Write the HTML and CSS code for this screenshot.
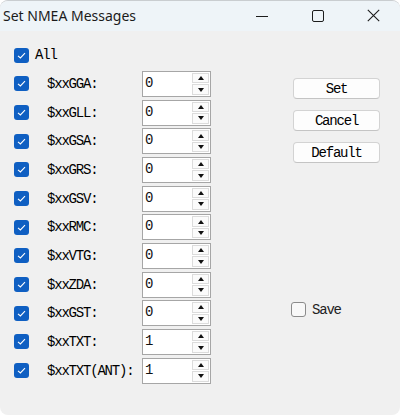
FILE: index.html
```html
<!DOCTYPE html>
<html>
<head>
<meta charset="utf-8">
<link rel="stylesheet" href="styles.css">
</head>
<body>
<div class="window">
  <div class="titlebar">
    <span class="title">Set NMEA Messages</span>
    <div class="controls">
      <span class="ctl ctl-min"><svg width="12" height="12" viewBox="0 0 12 12"><path d="M0 6.5H12" stroke="#1c1c1c" stroke-width="1"/></svg></span>
      <span class="ctl ctl-max"><svg width="12" height="12" viewBox="0 0 12 12"><rect x="0.5" y="0.5" width="11" height="11" rx="1.5" fill="none" stroke="#1c1c1c" stroke-width="1"/></svg></span>
      <span class="ctl ctl-close"><svg width="13" height="13" viewBox="0 0 13 13"><path d="M0.8 0.8L12.2 12.2M12.2 0.8L0.8 12.2" stroke="#1c1c1c" stroke-width="1.1"/></svg></span>
    </div>
  </div>
  <div class="content">
    <div class="list">
      <div class="row row-all">
        <span class="cb checked"><svg width="15" height="15" viewBox="0 0 15 15"><path d="M4 7.8L6.4 10L11 5.2" fill="none" stroke="#fff" stroke-width="1.1"/></svg></span>
        <span class="label">All</span>
      </div>
      <div class="row">
        <span class="cb checked"><svg width="15" height="15" viewBox="0 0 15 15"><path d="M4 7.8L6.4 10L11 5.2" fill="none" stroke="#fff" stroke-width="1.1"/></svg></span>
        <span class="label">$xxGGA:</span>
        <div class="spin"><span class="val">0</span><div class="arrows"><span class="btn"><i class="up"></i></span><span class="btn"><i class="down"></i></span></div></div>
      </div>
      <div class="row">
        <span class="cb checked"><svg width="15" height="15" viewBox="0 0 15 15"><path d="M4 7.8L6.4 10L11 5.2" fill="none" stroke="#fff" stroke-width="1.1"/></svg></span>
        <span class="label">$xxGLL:</span>
        <div class="spin"><span class="val">0</span><div class="arrows"><span class="btn"><i class="up"></i></span><span class="btn"><i class="down"></i></span></div></div>
      </div>
      <div class="row">
        <span class="cb checked"><svg width="15" height="15" viewBox="0 0 15 15"><path d="M4 7.8L6.4 10L11 5.2" fill="none" stroke="#fff" stroke-width="1.1"/></svg></span>
        <span class="label">$xxGSA:</span>
        <div class="spin"><span class="val">0</span><div class="arrows"><span class="btn"><i class="up"></i></span><span class="btn"><i class="down"></i></span></div></div>
      </div>
      <div class="row">
        <span class="cb checked"><svg width="15" height="15" viewBox="0 0 15 15"><path d="M4 7.8L6.4 10L11 5.2" fill="none" stroke="#fff" stroke-width="1.1"/></svg></span>
        <span class="label">$xxGRS:</span>
        <div class="spin"><span class="val">0</span><div class="arrows"><span class="btn"><i class="up"></i></span><span class="btn"><i class="down"></i></span></div></div>
      </div>
      <div class="row">
        <span class="cb checked"><svg width="15" height="15" viewBox="0 0 15 15"><path d="M4 7.8L6.4 10L11 5.2" fill="none" stroke="#fff" stroke-width="1.1"/></svg></span>
        <span class="label">$xxGSV:</span>
        <div class="spin"><span class="val">0</span><div class="arrows"><span class="btn"><i class="up"></i></span><span class="btn"><i class="down"></i></span></div></div>
      </div>
      <div class="row">
        <span class="cb checked"><svg width="15" height="15" viewBox="0 0 15 15"><path d="M4 7.8L6.4 10L11 5.2" fill="none" stroke="#fff" stroke-width="1.1"/></svg></span>
        <span class="label">$xxRMC:</span>
        <div class="spin"><span class="val">0</span><div class="arrows"><span class="btn"><i class="up"></i></span><span class="btn"><i class="down"></i></span></div></div>
      </div>
      <div class="row">
        <span class="cb checked"><svg width="15" height="15" viewBox="0 0 15 15"><path d="M4 7.8L6.4 10L11 5.2" fill="none" stroke="#fff" stroke-width="1.1"/></svg></span>
        <span class="label">$xxVTG:</span>
        <div class="spin"><span class="val">0</span><div class="arrows"><span class="btn"><i class="up"></i></span><span class="btn"><i class="down"></i></span></div></div>
      </div>
      <div class="row">
        <span class="cb checked"><svg width="15" height="15" viewBox="0 0 15 15"><path d="M4 7.8L6.4 10L11 5.2" fill="none" stroke="#fff" stroke-width="1.1"/></svg></span>
        <span class="label">$xxZDA:</span>
        <div class="spin"><span class="val">0</span><div class="arrows"><span class="btn"><i class="up"></i></span><span class="btn"><i class="down"></i></span></div></div>
      </div>
      <div class="row">
        <span class="cb checked"><svg width="15" height="15" viewBox="0 0 15 15"><path d="M4 7.8L6.4 10L11 5.2" fill="none" stroke="#fff" stroke-width="1.1"/></svg></span>
        <span class="label">$xxGST:</span>
        <div class="spin"><span class="val">0</span><div class="arrows"><span class="btn"><i class="up"></i></span><span class="btn"><i class="down"></i></span></div></div>
      </div>
      <div class="row">
        <span class="cb checked"><svg width="15" height="15" viewBox="0 0 15 15"><path d="M4 7.8L6.4 10L11 5.2" fill="none" stroke="#fff" stroke-width="1.1"/></svg></span>
        <span class="label">$xxTXT:</span>
        <div class="spin"><span class="val">1</span><div class="arrows"><span class="btn"><i class="up"></i></span><span class="btn"><i class="down"></i></span></div></div>
      </div>
      <div class="row">
        <span class="cb checked"><svg width="15" height="15" viewBox="0 0 15 15"><path d="M4 7.8L6.4 10L11 5.2" fill="none" stroke="#fff" stroke-width="1.1"/></svg></span>
        <span class="label">$xxTXT(ANT):</span>
        <div class="spin"><span class="val">1</span><div class="arrows"><span class="btn"><i class="up"></i></span><span class="btn"><i class="down"></i></span></div></div>
      </div>
    </div>
    <div class="side">
      <button class="pbtn pbtn-first">Set</button>
      <button class="pbtn">Cancel</button>
      <button class="pbtn">Default</button>
      <div class="save"><span class="cb"></span><span class="save-text">Save</span></div>
    </div>
  </div>
</div>
</body>
</html>
```

FILE: styles.css
```css
html, body {
  margin: 0;
  padding: 0;
  background: #ffffff;
}
.window {
  width: 400px;
  height: 415px;
  background: #f0f0f0;
  border-radius: 8px;
  overflow: hidden;
  box-sizing: border-box;
  border-top: 1px solid #c9cdd0;
  display: flex;
  flex-direction: column;
}
.titlebar {
  height: 30px;
  flex: none;
  background: #eef4f8;
  display: flex;
  align-items: center;
}
.title {
  font-family: "Noto Sans", sans-serif;
  font-size: 14px;
  color: #1b1b1b;
  padding-left: 3px;
  padding-bottom: 1px;
}
.controls {
  margin-left: auto;
  display: flex;
  height: 30px;
}
.ctl {
  width: 56px;
  display: flex;
  align-items: center;
  justify-content: center;
  padding-bottom: 1px;
}
.ctl-close {
  width: 54px;
}
.content {
  display: flex;
  flex: 1;
}
.list {
  width: 211px;
  padding: 10px 0 0 14px;
  box-sizing: border-box;
  display: flex;
  flex-direction: column;
}
.row {
  height: 28.66px;
  display: flex;
  align-items: center;
}
.cb {
  width: 15px;
  height: 15px;
  flex: none;
  box-sizing: border-box;
  border-radius: 3px;
  border: 1px solid #8b8b8b;
  background: #f8f8f8;
  display: block;
}
.cb.checked {
  background: #0f5fc2;
  border: none;
}
.cb svg {
  display: block;
}
.label {
  font-family: "Liberation Mono", monospace;
  font-size: 14px;
  letter-spacing: -1.2px;
  color: #000;
  margin-left: 18px;
  width: 95px;
  flex: none;
  white-space: nowrap;
}
.row-all .label {
  margin-left: 6px;
}
.spin {
  width: 69px;
  height: 26px;
  box-sizing: border-box;
  border: 1px solid #a6a6a6;
  background: #ffffff;
  display: flex;
  align-items: stretch;
}
.val {
  flex: 1;
  font-family: "Liberation Mono", monospace;
  font-size: 14px;
  color: #111;
  padding-left: 2px;
  padding-top: 3px;
  line-height: 16px;
}
.arrows {
  width: 17px;
  display: flex;
  flex-direction: column;
  padding: 1px 1px 1px 0;
  gap: 1px;
}
.btn {
  flex: 1;
  border: 1px solid #dcdcdc;
  background: #fbfbfb;
  display: flex;
  align-items: center;
  justify-content: center;
}
.up {
  width: 0;
  height: 0;
  border-left: 3.5px solid transparent;
  border-right: 3.5px solid transparent;
  border-bottom: 4px solid #111;
}
.down {
  width: 0;
  height: 0;
  border-left: 3.5px solid transparent;
  border-right: 3.5px solid transparent;
  border-top: 4px solid #111;
}
.side {
  margin-left: 80px;
  display: flex;
  flex-direction: column;
  align-items: flex-start;
}
.pbtn {
  width: 87px;
  height: 21px;
  margin: 11px 0 0 2px;
  padding: 0;
  box-sizing: border-box;
  background: #fdfdfd;
  border: 1px solid #d3d3d3;
  border-bottom-color: #c4c4c4;
  border-radius: 4px;
  font-family: "Liberation Mono", monospace;
  font-size: 14px;
  letter-spacing: -1.2px;
  color: #000;
  line-height: 18px;
}
.pbtn-first {
  margin-top: 47px;
}
.save {
  margin-top: 139px;
  display: flex;
  align-items: center;
  height: 15px;
}
.save-text {
  font-family: "Liberation Mono", monospace;
  font-size: 14px;
  letter-spacing: -1.2px;
  color: #222;
  margin-left: 6px;
}
```
